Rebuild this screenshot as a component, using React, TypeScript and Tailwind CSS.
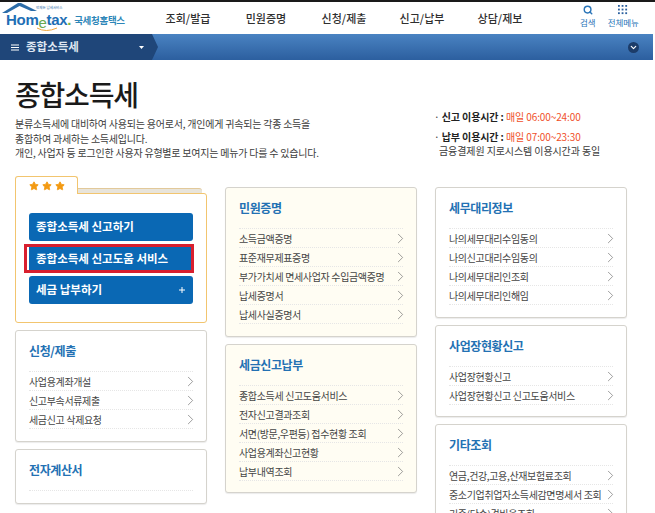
import { ChevronRight, ChevronDown, Search, Star } from "lucide-react";

const nav = ["조회/발급", "민원증명", "신청/제출", "신고/납부", "상담/제보"];

const font = { fontFamily: '"Noto Sans CJK KR", "Noto Sans", sans-serif' };

function MenuCard({
  title,
  items,
  tint,
  height,
}: {
  title: string;
  items: string[];
  tint?: boolean;
  height: string;
}) {
  return (
    <section
      className={`${height} ${tint ? "bg-[#fffdf3]" : "bg-white"} shrink-0 rounded-[3px] border border-[#d5d3cd] px-[13px] shadow-[0_1px_1px_rgba(0,0,0,0.08)]`}
    >
      <h2 className="mt-[11px] h-[18px] text-[12px] leading-[18px] font-bold tracking-[-0.4px] text-[#2371b3]">{title}</h2>
      <ul className="mt-[11px] border-t border-dotted border-[#e6e6e6]">
        {items.map((item) => (
          <li
            key={item}
            className="flex h-[19px] items-center justify-between border-b border-dotted border-[#e6e6e6] text-[10px] tracking-[-0.35px] whitespace-nowrap text-[#454545]"
          >
            <span>{item}</span>
            <ChevronRight size={17} strokeWidth={1} className="mr-[-6px] shrink-0 text-[#777]" />
          </li>
        ))}
      </ul>
    </section>
  );
}

function Logo() {
  return (
    <div className="relative flex h-full w-[149px] shrink-0 items-center pt-[4px] pl-[6px]">
      <svg className="absolute top-0 left-[1px]" width="40" height="13" viewBox="0 0 40 13">
        <path d="M1 11 L17 1 L20 1 L36 9 L30 9 L18.5 4 L6 11 Z" fill="#2b6ca8" />
      </svg>
      <span className="absolute top-[4px] left-[36px] text-[3.5px] leading-none text-[#2b6ca8]">언제든 납세서비스</span>
      <span
        className="text-[15px] leading-[16px] font-bold tracking-[-0.3px] text-[#1f6fb5]"
        style={{ fontFamily: '"Liberation Sans", sans-serif' }}
      >
        Hom<span className="relative top-[3px] font-normal text-[#6aa84f]">e</span>tax<span className="text-[#7ab33e]">.</span>
      </span>
      <span className="ml-[3px] text-[9.5px] leading-[14px] font-bold tracking-[-0.3px] text-[#2d86b8]">국세청홈택스</span>
      <svg className="absolute top-[25px] left-[36px]" width="22" height="6" viewBox="0 0 22 6">
        <path d="M1 1 Q10 6 21 1" fill="none" stroke="#f0a63c" strokeWidth="1" />
      </svg>
    </div>
  );
}

function FavoriteCard() {
  return (
    <section className="flex h-[148px] shrink-0 flex-col">
      <div className="flex h-[18px] items-end">
        <div className="relative z-10 -mb-px flex h-[18px] w-[63px] items-center gap-[3px] rounded-t-[3px] border-x border-t border-[#f2c56f] bg-white pl-[13px]">
          <Star size={10} fill="#f39a12" stroke="#f39a12" />
          <Star size={10} fill="#f39a12" stroke="#f39a12" />
          <Star size={10} fill="#f39a12" stroke="#f39a12" />
        </div>
        <div className="mr-[5px] h-[5px] flex-1 rounded-tr-[3px] border-t border-[#e2c99a] bg-[#e8e4da]" />
      </div>
      <div className="flex flex-1 flex-col gap-[3px] rounded-b-[3px] rounded-tr-[3px] border border-[#f2c56f] bg-white px-[13px] pt-[19px]">
        <div className="flex h-[28px] items-center rounded-[3px] bg-[#0a68b4] pl-[7px] text-[11.5px] font-bold text-white">
          종합소득세 신고하기
        </div>
        <div className="-mx-[5px] mr-[-1px] flex h-[29px] border-[3px] border-[#d81f2e] bg-white pl-[2px]">
          <div className="flex flex-1 items-center bg-[#0a68b4] pl-[7px] text-[11.5px] font-bold whitespace-nowrap text-white">
            종합소득세 신고도움 서비스
          </div>
        </div>
        <div className="flex h-[28px] items-center justify-between rounded-[3px] bg-[#0a68b4] pr-[8px] pl-[7px] text-[11.5px] font-bold text-white">
          세금 납부하기
          <svg width="6" height="6" viewBox="0 0 6 6">
            <path d="M3 0V6M0 3H6" stroke="#fff" strokeWidth="1" />
          </svg>
        </div>
      </div>
    </section>
  );
}

export default function App() {
  return (
    <div className="h-[513px] w-[655px] overflow-hidden bg-white" style={font}>
      <div className="h-[2px] bg-[#1a1a1a]" />
      <header className="flex h-[32px] items-center">
        <Logo />
        <nav className="flex h-full items-center">
          {nav.map((label) => (
            <a key={label} className="w-[78px] text-center text-[11px] font-medium text-[#2f2f2f]">
              {label}
            </a>
          ))}
        </nav>
        <div className="-mt-[4px] ml-[41px] flex flex-col items-center text-[#2a75b8]">
          <Search size={10} strokeWidth={3.5} />
          <span className="mt-[2px] text-[8.5px] leading-[11px]">검색</span>
        </div>
        <div className="-mt-[4px] ml-[12px] flex flex-col items-center text-[#2a75b8]">
          <svg width="10" height="10" viewBox="0 0 11 11" fill="#2a5f9e">
            {[1, 5, 9].flatMap((y) =>
              [1, 5, 9].map((x) => <rect key={`${x}-${y}`} x={x - 1} y={y - 1} width="2" height="2" />),
            )}
          </svg>
          <span className="mt-[2px] text-[8.5px] leading-[11px] whitespace-nowrap">전체메뉴</span>
        </div>
      </header>

      <div className="mr-[2px] flex h-[26px] items-center justify-between bg-gradient-to-b from-[#4a83c2] to-[#2c5f9f]">
        <div className="flex h-full w-[158px] items-center bg-[#1f4679] pl-[11px] text-[11.5px] font-bold text-[#dfe7f2] [clip-path:polygon(0_0,152px_0,100%_50%,152px_100%,0_100%)]">
          <svg width="8" height="7" viewBox="0 0 8 7" fill="#fff" className="mr-[7px]">
            <rect width="8" height="1" y="0.5" />
            <rect width="8" height="1" y="3" />
            <rect width="8" height="1" y="5.5" />
          </svg>
          종합소득세
          <svg width="5" height="3" viewBox="0 0 5 3" fill="#fff" className="ml-[60px]">
            <path d="M0 0H5L2.5 3Z" />
          </svg>
        </div>
        <div className="mr-[14px] flex h-[11px] w-[11px] items-center justify-center rounded-full bg-[#1c3c69] text-white">
          <ChevronDown size={9} strokeWidth={3} />
        </div>
      </div>

      <div className="flex h-[115px] px-[15px]">
        <div className="w-[419px] shrink-0">
          <h1 className="mt-[14px] h-[40px] text-[28px] leading-[40px] font-medium tracking-[-1.2px] text-[#1a1a1a]">종합소득세</h1>
          <p className="mt-[3px] text-[10px] leading-[14.5px] tracking-[-0.22px] whitespace-nowrap text-[#3c3c3c]">
            분류소득세에 대비하여 사용되는 용어로서, 개인에게 귀속되는 각종 소득을
            <br />
            종합하여 과세하는 소득세입니다.
            <br />
            개인, 사업자 등 로그인한 사용자 유형별로 보여지는 메뉴가 다를 수 있습니다.
          </p>
        </div>
        <div className="mt-[50px] text-[10px] leading-[14px] tracking-[-0.1px] whitespace-nowrap text-[#3c3c3c]">
          <p>
            · <b className="text-[#222]">신고 이용시간 :</b> <span className="text-[#f0502a]">매일 06:00~24:00</span>
          </p>
          <p className="mt-[6px]">
            · <b className="text-[#222]">납부 이용시간 :</b> <span className="text-[#f0502a]">매일 07:00~23:30</span>
          </p>
          <p className="pl-[5px]">금융결제원 지로시스템 이용시간과 동일</p>
        </div>
      </div>

      <div className="flex gap-[18px] pl-[15px]">
        <div className="flex w-[192px] shrink-0 flex-col gap-[7px]">
          <FavoriteCard />
          <MenuCard
            title="신청/제출"
            height="h-[112px]"
            items={["사업용계좌개설", "신고부속서류제출", "세금신고 삭제요청"]}
          />
          <MenuCard title="전자계산서" height="h-[55px]" items={[]} />
        </div>
        <div className="flex w-[192px] shrink-0 flex-col gap-[7px] pt-[12px]">
          <MenuCard
            title="민원증명"
            tint
            height="h-[150px]"
            items={["소득금액증명", "표준재무제표증명", "부가가치세 면세사업자 수입금액증명", "납세증명서", "납세사실증명서"]}
          />
          <MenuCard
            title="세금신고납부"
            tint
            height="h-[149px]"
            items={["종합소득세 신고도움서비스", "전자신고결과조회", "서면(방문,우편등) 접수현황 조회", "사업용계좌신고현황", "납부내역조회"]}
          />
        </div>
        <div className="flex w-[192px] shrink-0 flex-col gap-[7px] pt-[12px]">
          <MenuCard
            title="세무대리정보"
            height="h-[131px]"
            items={["나의세무대리수임동의", "나의신고대리수임동의", "나의세무대리인조회", "나의세무대리인해임"]}
          />
          <MenuCard title="사업장현황신고" height="h-[92px]" items={["사업장현황신고", "사업장현황신고 신고도움서비스"]} />
          <MenuCard
            title="기타조회"
            height="h-[130px]"
            items={["연금,건강,고용,산재보험료조회", "중소기업취업자소득세감면명세서 조회", "기준(단순)경비율조회"]}
          />
        </div>
      </div>
    </div>
  );
}
